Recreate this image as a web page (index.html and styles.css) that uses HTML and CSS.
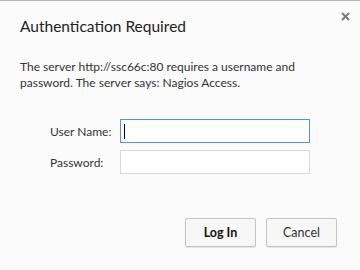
FILE: index.html
```html
<!DOCTYPE html>
<html>
<head>
<meta charset="utf-8">
<link rel="stylesheet" href="styles.css">
</head>
<body>
<div class="dialog">
  <div class="header">
    <h1 class="title">Authentication Required</h1>
    <button class="close" aria-label="Close">
      <svg width="9" height="9" viewBox="0 0 9 9"><path d="M1 1L8 8M8 1L1 8" stroke="#7b7b7b" stroke-width="2"/></svg>
    </button>
  </div>
  <p class="message">The server http://ssc66c:80 requires a username and password. The server says: Nagios Access.</p>
  <div class="form">
    <label class="label" for="u">User Name:</label>
    <div class="input focused"><span class="caret"></span></div>
    <label class="label" for="p">Password:</label>
    <div class="input"></div>
  </div>
  <div class="buttons">
    <button class="btn primary">Log In</button>
    <button class="btn">Cancel</button>
  </div>
</div>
</body>
</html>
```
FILE: styles.css
```css
html, body {
  margin: 0;
  padding: 0;
  background: #fbfbfb;
}
body {
  width: 360px;
  height: 270px;
  overflow: hidden;
  font-family: "Lato", "Noto Sans", sans-serif;
  color: #333;
}
.dialog {
  box-sizing: border-box;
  width: 360px;
  height: 270px;
  border-top: 1px solid #b4b4b4;
  padding: 0 23px 0 20px;
}
.header {
  display: flex;
  justify-content: space-between;
  align-items: flex-start;
}
.title {
  margin: 13px 0 0 0;
  font-size: 15.5px;
  font-weight: normal;
  color: #222;
  line-height: 24px;
}
.close {
  border: 0;
  background: none;
  padding: 0;
  margin: 11px -13px 0 0;
  width: 9px;
  height: 9px;
  display: flex;
}
.message {
  margin: 21px 0 0 0;
  font-size: 12px;
  line-height: 16px;
  color: #333;
}
.form {
  display: grid;
  grid-template-columns: 70px 190px;
  row-gap: 7px;
  align-items: center;
  margin: 28px 0 0 30px;
}
.label {
  font-size: 12px;
  color: #333;
}
.input {
  box-sizing: border-box;
  height: 24px;
  border: 1px solid #d9d9d9;
  background: #fff;
  position: relative;
}
.input.focused {
  border-color: #4d90fe;
}
.caret {
  position: absolute;
  left: 3px;
  top: 4px;
  width: 1px;
  height: 15px;
  background: #000;
}
.buttons {
  display: flex;
  justify-content: flex-end;
  gap: 10px;
  margin-top: 44px;
}
.btn {
  box-sizing: border-box;
  width: 71px;
  height: 29px;
  border: 1px solid #c3c3c3;
  border-radius: 2px;
  background: #f7f7f7;
  box-shadow: 0 1px 0 rgba(0,0,0,0.08);
  font-family: "Lato", "Noto Sans", sans-serif;
  font-size: 12.5px;
  color: #333;
  padding: 0;
}
.btn.primary {
  font-weight: bold;
  color: #111;
}
```
